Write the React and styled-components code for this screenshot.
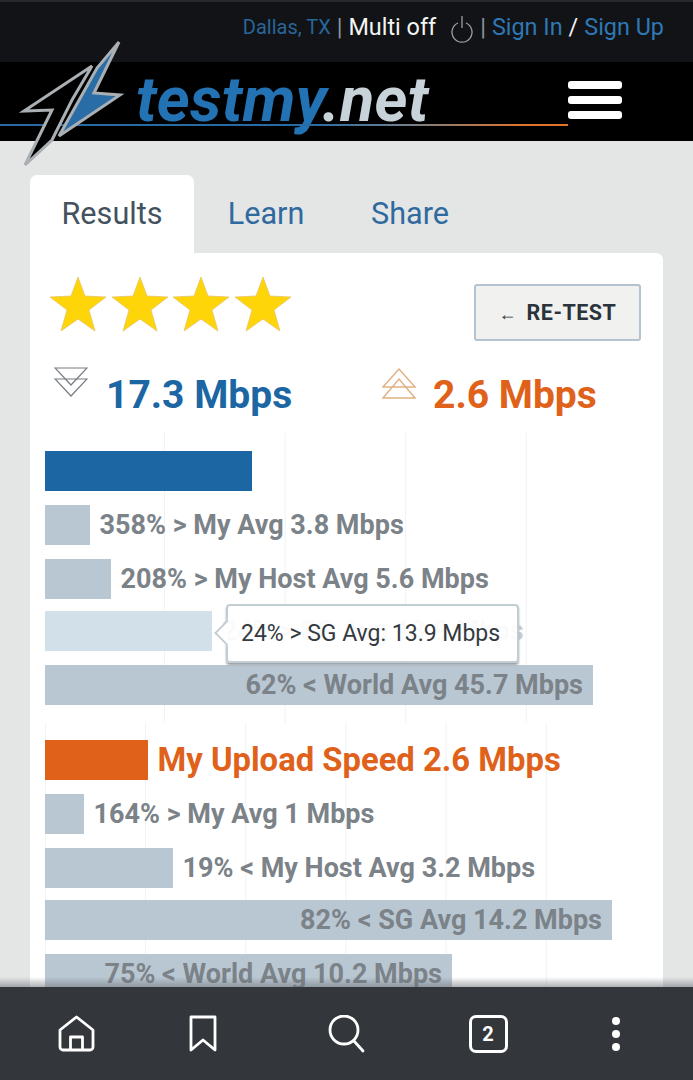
import styled, { createGlobalStyle } from "styled-components";

const Global = createGlobalStyle`
  html, body {
    margin: 0;
    padding: 0;
    background: #e4e6e6;
    font-family: Roboto, "Liberation Sans", sans-serif;
  }
  * { box-sizing: border-box; }
`;

const Page = styled.div`
  position: relative;
  display: flex;
  flex-direction: column;
  width: 693px;
  height: 1080px;
  overflow: hidden;
`;

const TopBar = styled.div`
  display: flex;
  justify-content: flex-end;
  align-items: center;
  gap: 6px;
  height: 62px;
  padding: 0 29px 10px 0;
  background: #111316;
  border-top: 2px solid #27292c;
  font-size: 23.4px;
  color: #8d949a;
`;

const TopLink = styled.span`
  color: ${(p) => (p.$dim ? "#2a659a" : "#2f78b5")};
  font-size: ${(p) => (p.$dim ? "20px" : "23.4px")};
`;

const TopText = styled.span`
  color: #f4f5f5;
`;

const Header = styled.div`
  position: relative;
  display: flex;
  justify-content: flex-end;
  align-items: center;
  height: 79px;
  padding: 0 71px 4px 0;
  background: #000;
`;

const Rule = styled.div`
  position: absolute;
  left: 0;
  top: 62px;
  width: 568px;
  height: 2px;
  background: linear-gradient(90deg, #2a6aa3 0, #2a6aa3 55%, #6b7f90 70%, #e0742a 92%);
`;

const LogoText = styled.div`
  position: absolute;
  left: 136px;
  top: -3px;
  font-size: 63px;
  line-height: 82px;
  font-weight: 700;
  font-style: italic;
  letter-spacing: 0.2px;
  color: #2272b4;
  white-space: nowrap;
`;

const LogoNet = styled.span`
  color: #c8d2d9;
`;

const Bolt = styled.svg`
  position: absolute;
  left: 18px;
  top: -24px;
  z-index: 2;
`;

const Burger = styled.div`
  display: flex;
  flex-direction: column;
  gap: 7px;
  width: 54px;
`;

const BurgerBar = styled.div`
  height: 8px;
  border-radius: 3px;
  background: #fff;
`;

const Main = styled.div`
  position: relative;
  flex: 1;
  min-height: 0;
  overflow: hidden;
  padding: 34px 30px 0;
`;

const Tabs = styled.div`
  display: flex;
  height: 78px;
`;

const Tab = styled.div`
  display: flex;
  justify-content: center;
  padding-top: 20px;
  width: ${(p) => p.$w}px;
  font-size: 30.6px;
  line-height: 38px;
  border-radius: 7px 7px 0 0;
  background: ${(p) => (p.$active ? "#fff" : "transparent")};
  color: ${(p) => (p.$active ? "#43525e" : "#2f6a9f")};
`;

const Card = styled.div`
  background: #fff;
  border-radius: 0 7px 0 0;
  padding: 22px 17px 0 15px;
  height: 800px;
`;

const RatingRow = styled.div`
  display: flex;
  justify-content: space-between;
  align-items: flex-start;
  padding-left: 4px;
  padding-right: 5px;
`;

const Stars = styled.div`
  display: flex;
  gap: 3.5px;
`;

const RetestButton = styled.div`
  display: flex;
  align-items: center;
  justify-content: center;
  gap: 10px;
  width: 167px;
  height: 57px;
  margin-top: 9px;
  background: #f1f2f0;
  border: 2px solid #b4c3d0;
  border-radius: 3px;
  color: #2b333b;
  font-size: 21.5px;
  font-weight: 700;
  letter-spacing: 0.5px;
`;

const Arrow = styled.span`
  font-size: 18px;
  letter-spacing: 0;
  margin-top: 3px;
`;

const Speeds = styled.div`
  display: flex;
  height: 92px;
  padding-top: 26px;
`;

const Speed = styled.div`
  position: relative;
  display: flex;
  width: ${(p) => p.$w}px;
  padding-left: ${(p) => p.$pad}px;
`;

const SpeedIcon = styled.svg`
  flex: none;
  margin-top: ${(p) => p.$top}px;
`;

const SpeedValue = styled.div`
  margin-left: ${(p) => p.$gap}px;
  margin-top: 7px;
  font-size: 39px;
  line-height: 42px;
  font-weight: 700;
  color: ${(p) => p.$color};
`;

const Chart = styled.div`
  position: relative;
  display: flex;
  flex-direction: column;
  padding: ${(p) => p.$top}px 0 18px;
  background-image: linear-gradient(90deg, #f1f2f3 1px, transparent 1px);
  background-size: ${(p) => p.$period}px 100%;
  background-position: ${(p) => p.$offset}px 0;
`;

const Row = styled.div`
  position: relative;
  display: flex;
  align-items: center;
  gap: 9.5px;
  height: 40px;
  margin-bottom: ${(p) => (p.$last ? 0 : p.$tight ? 12 : 14)}px;
`;

const Bar = styled.div`
  display: flex;
  align-items: center;
  justify-content: flex-end;
  flex: none;
  height: 40px;
  padding-right: 10px;
  background: ${(p) => p.$color || "#b9c7d3"};
  white-space: nowrap;
`;

const Label = styled.span`
  font-size: ${(p) => (p.$big ? "32.8px" : "27px")};
  font-weight: 700;
  white-space: nowrap;
  color: ${(p) => p.$color || "#7b8288"};
`;

const Tooltip = styled.div`
  position: absolute;
  left: 181px;
  top: -7px;
  width: 293px;
  height: 59px;
  display: flex;
  align-items: center;
  padding-left: 13px;
  background: rgba(255, 255, 255, 0.9);
  border: 2px solid #c2ccd3;
  border-radius: 4px;
  box-shadow: 0 2px 2px #9aa3aa;
  color: #333a40;
  font-size: 23px;
  white-space: nowrap;
  z-index: 2;

  &::before {
    content: "";
    position: absolute;
    left: -10px;
    top: 17px;
    width: 18px;
    height: 18px;
    background: #fff;
    border-left: 2px solid #c2ccd3;
    border-bottom: 2px solid #c2ccd3;
    transform: rotate(45deg);
    clip-path: polygon(0 0, 100% 100%, 0 100%);
  }
`;

const BottomNav = styled.div`
  position: relative;
  display: grid;
  grid-template-columns: 152px 102px 184px 100px 155px;
  align-items: center;
  height: 93px;
  flex: none;
  background: #33363a;
  color: #fff;

  &::before {
    content: "";
    position: absolute;
    left: 0;
    right: 0;
    top: -10px;
    height: 10px;
    background: linear-gradient(180deg, rgba(120, 125, 130, 0), rgba(110, 115, 120, 0.55));
  }
`;

const NavSlot = styled.div`
  display: flex;
  justify-content: center;
  align-items: center;
`;

const TabCount = styled.div`
  display: flex;
  align-items: center;
  justify-content: center;
  width: 39px;
  height: 38px;
  border: 3px solid #fff;
  border-radius: 7px;
  font-size: 20px;
  font-weight: 700;
  color: #fff;
`;

const Dots = styled.div`
  display: flex;
  flex-direction: column;
  gap: 5px;
`;

const Dot = styled.div`
  width: 8px;
  height: 8px;
  border-radius: 50%;
  background: #fff;
`;

const download = [
  { width: 207, color: "#1c66a3" },
  { width: 45, label: "358% > My Avg 3.8 Mbps" },
  { width: 66, label: "208% > My Host Avg 5.6 Mbps", tight: true },
  {
    width: 167,
    color: "#d2e0ea",
    label: "24% > SG Avg 13.9 Mbps",
    faded: true,
    tooltip: "24% > SG Avg: 13.9 Mbps",
  },
  { width: 548, inside: true, label: "62% < World Avg 45.7 Mbps" },
];

const upload = [
  { width: 103, color: "#e0611a", label: "My Upload Speed 2.6 Mbps", labelColor: "#e0611a", big: true },
  { width: 39, label: "164% > My Avg 1 Mbps" },
  { width: 128, label: "19% < My Host Avg 3.2 Mbps", tight: true },
  { width: 567, inside: true, label: "82% < SG Avg 14.2 Mbps" },
  { width: 407, inside: true, label: "75% < World Avg 10.2 Mbps" },
];

function Star() {
  return (
    <svg width="58" height="58" viewBox="0 0 58 58">
      <polygon
        points="29,2 36,21 57,22 40,35 46,56 29,44 12,56 18,35 1,22 22,21"
        fill="#fdd508"
        stroke="#e9c46a"
        strokeWidth="0.8"
      />
    </svg>
  );
}

function BarRow({ row, last }) {
  return (
    <Row $tight={row.tight} $last={last}>
      <Bar $color={row.color} style={{ width: row.width }}>
        {row.inside && <Label>{row.label}</Label>}
      </Bar>
      {!row.inside && row.label && (
        <Label $big={row.big} $color={row.faded ? "#c9cdd0" : row.labelColor}>
          {row.label}
        </Label>
      )}
      {row.tooltip && <Tooltip>{row.tooltip}</Tooltip>}
    </Row>
  );
}

export default function App() {
  return (
    <Page>
      <Global />
      <TopBar>
        <TopLink $dim>Dallas, TX</TopLink>
        <span>|</span>
        <TopText>Multi off</TopText>
        <svg width="24" height="28" viewBox="0 0 24 28" style={{ marginLeft: 8, marginTop: 3 }}>
          <path d="M8 8a10 10 0 1 0 8 0" fill="none" stroke="#9aa0a5" strokeWidth="1.3" />
          <path d="M12 1v12" stroke="#9aa0a5" strokeWidth="1.3" />
        </svg>
        <span>|</span>
        <TopLink>Sign In</TopLink>
        <TopText>/</TopText>
        <TopLink>Sign Up</TopLink>
      </TopBar>
      <Header>
        <LogoText>
          testmy<LogoNet>.net</LogoNet>
        </LogoText>
        <Rule />
        <Bolt width="110" height="132" viewBox="18 38 110 132">
          <polygon points="92,66 24,111 52,110 25,165 52,140 72,100" fill="#000" stroke="#a9afb3" strokeWidth="3" />
          <polygon points="119,42 94,93 120,95 59,136 97,68" fill="#2a6ca6" stroke="#a9afb3" strokeWidth="3" />
        </Bolt>
        <Burger>
          <BurgerBar />
          <BurgerBar />
          <BurgerBar />
        </Burger>
      </Header>
      <Main>
        <Tabs>
          <Tab $w={164} $active>
            Results
          </Tab>
          <Tab $w={144}>Learn</Tab>
          <Tab $w={144}>Share</Tab>
        </Tabs>
        <Card>
          <RatingRow>
            <Stars>
              <Star />
              <Star />
              <Star />
              <Star />
            </Stars>
            <RetestButton>
              <Arrow>←</Arrow>
              RE-TEST
            </RetestButton>
          </RatingRow>
          <Speeds>
            <Speed $w={337} $pad={9}>
              <SpeedIcon $top={0} width="34" height="32" viewBox="0 0 34 32">
                <path d="M1 1h32L17 18z M1 12h32L17 29z" fill="none" stroke="#767c82" strokeWidth="1.2" />
              </SpeedIcon>
              <SpeedValue $gap={18} $color="#1c66a3">17.3 Mbps</SpeedValue>
            </Speed>
            <Speed $w={260} $pad={0}>
              <SpeedIcon $top={1} width="34" height="32" viewBox="0 0 34 32">
                <path d="M17 1l16 18H1z M17 11l16 19H1z" fill="none" stroke="#e0b184" strokeWidth="1.4" />
              </SpeedIcon>
              <SpeedValue $gap={17} $color="#e0611a">2.6 Mbps</SpeedValue>
            </Speed>
          </Speeds>
          <Chart $top={18} $period={120.6} $offset={119}>
            {download.map((row, i) => (
              <BarRow key={row.width} row={row} last={i === download.length - 1} />
            ))}
          </Chart>
          <Chart $top={17} $period={100.2} $offset={100}>
            {upload.map((row, i) => (
              <BarRow key={row.width} row={row} last={i === upload.length - 1} />
            ))}
          </Chart>
        </Card>
      </Main>
      <BottomNav>
        <NavSlot>
          <svg width="37" height="37" viewBox="0 0 37 37" fill="none" stroke="#fff" strokeWidth="2.8" strokeLinejoin="round">
            <path d="M2 15L18.5 2 35 15v17a3 3 0 0 1-3 3H5a3 3 0 0 1-3-3z" />
            <path d="M12.5 35V22h12v13" />
          </svg>
        </NavSlot>
        <NavSlot>
          <svg width="28" height="37" viewBox="0 0 28 37" fill="none" stroke="#fff" strokeWidth="2.8" strokeLinejoin="round">
            <path d="M2 2h24v33L14 25 2 35z" />
          </svg>
        </NavSlot>
        <NavSlot>
          <svg width="38" height="38" viewBox="0 0 38 38" fill="none" stroke="#fff" strokeWidth="2.8" strokeLinecap="round">
            <circle cx="17" cy="15" r="14" />
            <path d="M27 26l9 10" />
          </svg>
        </NavSlot>
        <NavSlot>
          <TabCount>2</TabCount>
        </NavSlot>
        <NavSlot>
          <Dots>
            <Dot />
            <Dot />
            <Dot />
          </Dots>
        </NavSlot>
      </BottomNav>
    </Page>
  );
}
